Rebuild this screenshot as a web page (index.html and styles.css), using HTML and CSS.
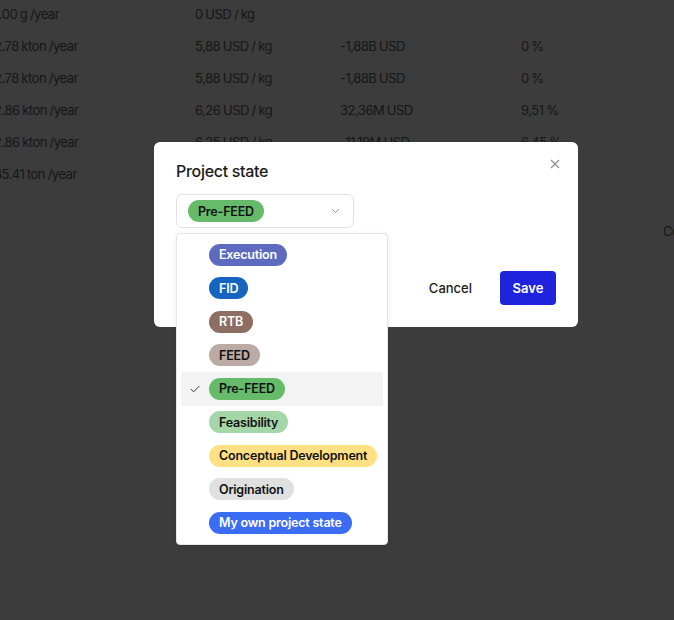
FILE: index.html
```html
<!DOCTYPE html>
<html>
<head>
<meta charset="utf-8">
<link rel="stylesheet" href="styles.css">
</head>
<body>
<div class="page">
  <div class="table">
    <div class="row"><span>1.00 g /year</span><span>0 USD / kg</span><span></span><span></span></div>
    <div class="row"><span>2.78 kton /year</span><span>5,88 USD / kg</span><span>-1,88B USD</span><span>0 %</span></div>
    <div class="row"><span>2.78 kton /year</span><span>5,88 USD / kg</span><span>-1,88B USD</span><span>0 %</span></div>
    <div class="row"><span>2.86 kton /year</span><span>6,26 USD / kg</span><span>32,36M USD</span><span>9,51 %</span></div>
    <div class="row"><span>2.86 kton /year</span><span>6,25 USD / kg</span><span>-11,19M USD</span><span>6,45 %</span></div>
    <div class="row"><span>35.41 ton /year</span><span></span><span></span><span></span></div>
  </div>
  <div class="side-text">Co</div>
</div>

<div class="modal">
  <div class="modal-head">
    <h2 class="modal-title">Project state</h2>
    <span class="close">
      <svg width="10" height="10" viewBox="0 0 10 10"><path d="M1 1L9 9M9 1L1 9" stroke="#8a8a8a" stroke-width="1.1" fill="none"/></svg>
    </span>
  </div>
  <div class="select">
    <span class="pill pre-feed">Pre-FEED</span>
    <svg class="chev" width="9" height="6" viewBox="0 0 9 6"><path d="M1 1L4.5 4.5L8 1" stroke="#9a9a9a" stroke-width="1" fill="none"/></svg>
  </div>
  <div class="actions">
    <button class="btn-cancel">Cancel</button>
    <button class="btn-save">Save</button>
  </div>

  <div class="dropdown">
    <div class="item"><span class="check"></span><span class="pill execution">Execution</span></div>
    <div class="item"><span class="check"></span><span class="pill fid">FID</span></div>
    <div class="item"><span class="check"></span><span class="pill rtb">RTB</span></div>
    <div class="item"><span class="check"></span><span class="pill feed">FEED</span></div>
    <div class="item selected"><span class="check"><svg width="10" height="8" viewBox="0 0 10 8"><path d="M0.8 4L3.6 6.8L9.2 1.2" stroke="#333" stroke-width="1" fill="none"/></svg></span><span class="pill pre-feed">Pre-FEED</span></div>
    <div class="item"><span class="check"></span><span class="pill feasibility">Feasibility</span></div>
    <div class="item"><span class="check"></span><span class="pill conceptual">Conceptual Development</span></div>
    <div class="item"><span class="check"></span><span class="pill origination">Origination</span></div>
    <div class="item"><span class="check"></span><span class="pill own">My own project state</span></div>
  </div>
</div>
</body>
</html>
```

FILE: styles.css
```css
* { box-sizing: border-box; }
html, body { margin: 0; padding: 0; }
body {
  width: 674px;
  height: 620px;
  overflow: hidden;
  background: #3c3c3c;
  font-family: Inter, "Liberation Sans", sans-serif;
  position: relative;
}
.page {
  color: #161616;
  font-size: 13px;
  letter-spacing: -0.5px;
  word-spacing: -0.5px;
}
.table {
  margin-left: -6px;
  margin-top: -2px;
}
.row {
  display: grid;
  grid-template-columns: 201px 145px 181px 100px;
  height: 32px;
  align-items: center;
}
.side-text {
  margin-left: 663px;
  margin-top: 33px;
}

.modal {
  position: absolute;
  left: 154px;
  top: 142px;
  width: 424px;
  height: 185px;
  background: #fff;
  border-radius: 6px;
  padding: 19px 22px 22px 22px;
  color: #1b1b1b;
}
.modal-head {
  display: flex;
  justify-content: space-between;
  align-items: flex-start;
}
.modal-title {
  margin: 0;
  font-size: 16px;
  line-height: 20px;
  font-weight: 500;
  letter-spacing: -0.3px;
}
.close {
  display: flex;
  margin-top: -2px;
  margin-right: -4px;
}
.select {
  margin-top: 13px;
  width: 178px;
  height: 34px;
  border: 1px solid #e2e2e2;
  border-radius: 6px;
  display: flex;
  align-items: center;
  justify-content: space-between;
  padding: 0 13px 0 11px;
}
.chev { display: block; }
.pill {
  display: inline-flex;
  align-items: center;
  height: 22px;
  padding: 0 10px;
  border-radius: 11px;
  font-size: 12.5px;
  font-weight: 600;
  letter-spacing: -0.2px;
  color: #111;
  white-space: nowrap;
}
.execution { background: #5c6bc0; color: #fff; }
.fid { background: #1565c0; color: #fff; }
.rtb { background: #8d6e63; color: #fff; }
.feed { background: #bcaaa4; }
.pre-feed { background: #66bb6a; }
.feasibility { background: #a5d6a7; }
.conceptual { background: #ffe082; }
.origination { background: #e0e0e0; }
.own { background: #3a6cf4; color: #fff; }

.actions {
  margin-top: 43px;
  display: flex;
  justify-content: flex-end;
  gap: 12px;
}
.actions button {
  font-family: inherit;
  font-size: 13px;
  height: 34px;
  border: none;
  border-radius: 4px;
  cursor: pointer;
}
.btn-cancel {
  background: transparent;
  color: #1b1b1b;
  font-weight: 500;
  padding: 0 16px;
}
.btn-save {
  background: #1f23dc;
  color: #fff;
  font-weight: 600;
  width: 56px;
  padding: 0;
}

.dropdown {
  position: absolute;
  left: 22px;
  top: 91px;
  width: 212px;
  background: #fff;
  border: 1px solid #e4e4e4;
  border-radius: 4px;
  padding: 4px 4px;
  box-shadow: 0 2px 6px rgba(0,0,0,0.08);
}
.item {
  height: 33.5px;
  display: flex;
  align-items: center;
  padding-left: 9px;
  border-radius: 2px;
}
.item.selected { background: #f3f3f3; }
.check {
  width: 19px;
  display: flex;
  align-items: center;
}
```
